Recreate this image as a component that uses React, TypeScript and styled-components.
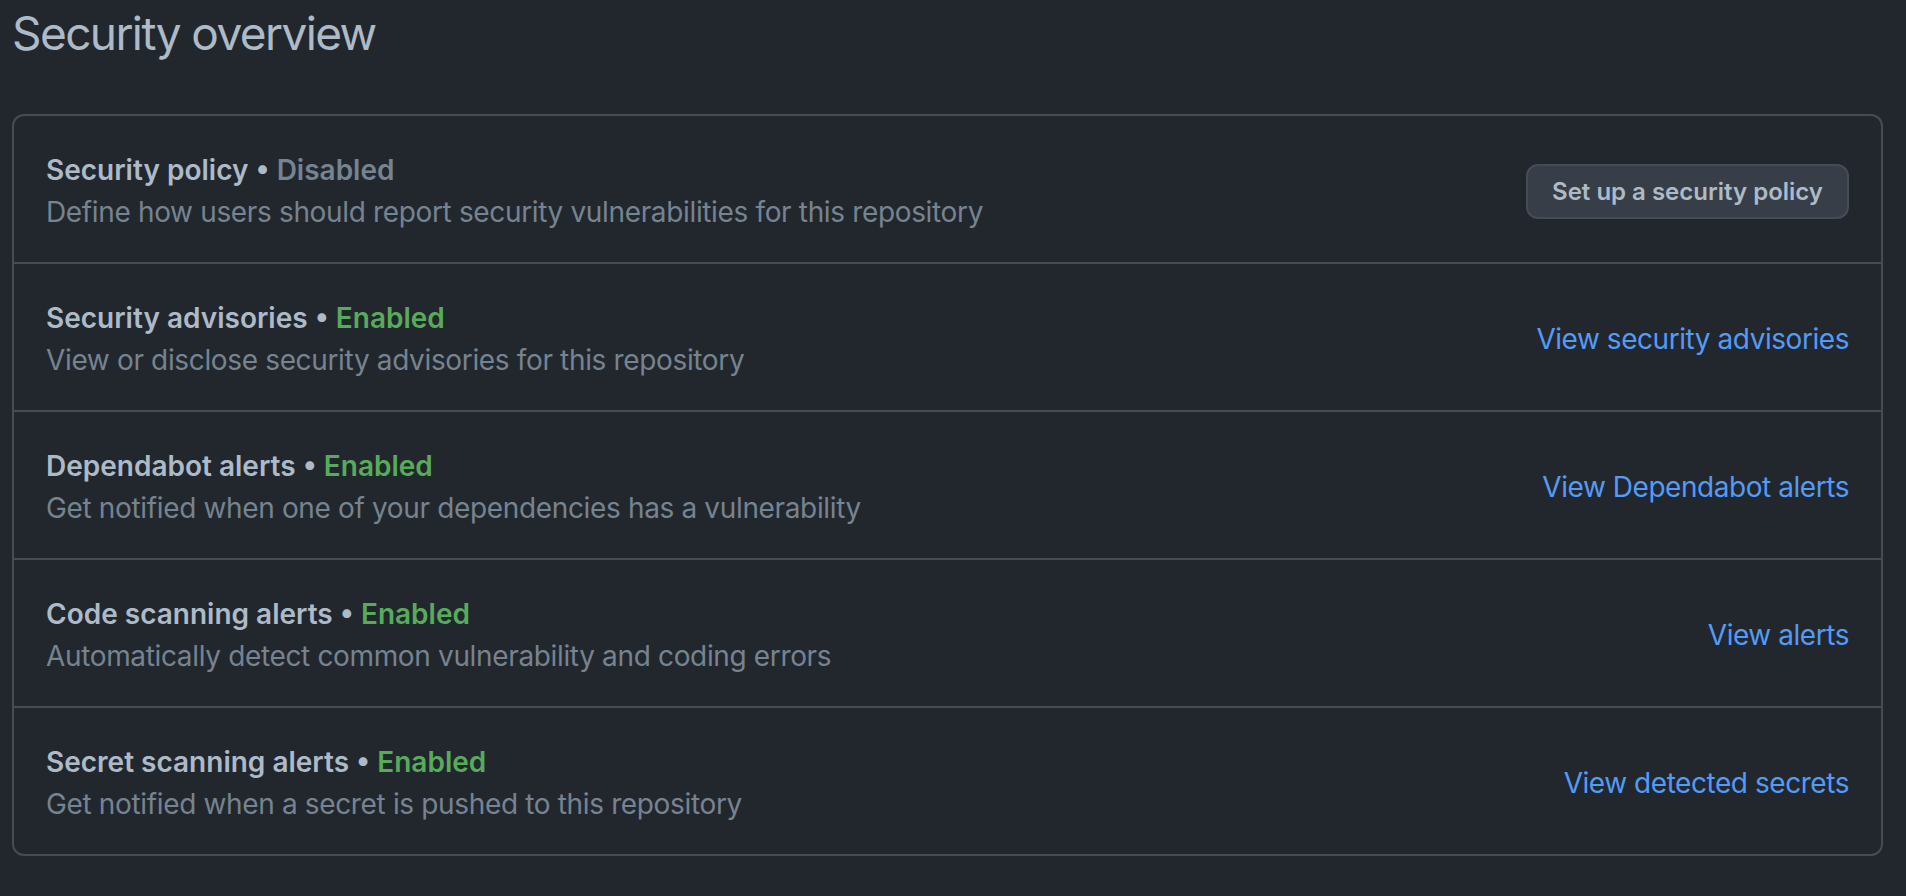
import React from "react";
import styled, { createGlobalStyle } from "styled-components";

const GlobalStyle = createGlobalStyle`
  html, body {
    margin: 0;
    padding: 0;
    background: #22272e;
  }
  body {
    font-family: Inter, "Noto Sans", "Liberation Sans", sans-serif;
    color: #adbac7;
  }
`;

const Page = styled.main`
  box-sizing: border-box;
  width: 1906px;
  min-height: 896px;
  padding: 3px 23px 0 12px;
  background: #22272e;
`;

const Heading = styled.h1`
  margin: 0 0 51px;
  font-size: 46px;
  line-height: 60px;
  font-weight: 400;
  letter-spacing: -1.6px;
  color: #adbac7;
`;

const Box = styled.section`
  border: 2px solid #444c56;
  border-radius: 12px;
  overflow: hidden;
`;

const Row = styled.div`
  display: flex;
  align-items: center;
  justify-content: space-between;
  padding: 33px 32px 29px;
  & + & {
    border-top: 2px solid #444c56;
  }
`;

const Info = styled.div`
  display: flex;
  flex-direction: column;
`;

const Title = styled.div`
  font-size: 28px;
  line-height: 42px;
  font-weight: 600;
  color: #adbac7;
`;

const Status = styled.span<{ $enabled: boolean }>`
  color: ${(p) => (p.$enabled ? "#57ab5a" : "#768390")};
`;

const Description = styled.div`
  font-size: 28px;
  line-height: 42px;
  font-weight: 400;
  letter-spacing: -0.35px;
  color: #768390;
`;

const ActionLink = styled.a`
  font-size: 28px;
  line-height: 42px;
  letter-spacing: -0.45px;
  color: #539bf5;
  text-decoration: none;
`;

const Button = styled.button`
  box-sizing: border-box;
  height: 55px;
  padding: 0 24px;
  font-family: inherit;
  font-size: 24px;
  font-weight: 600;
  color: #adbac7;
  background: #373e47;
  border: 2px solid #444c56;
  border-radius: 12px;
`;

type Item = {
  title: string;
  enabled: boolean;
  description: string;
  action: string;
  button?: boolean;
};

const items: Item[] = [
  {
    title: "Security policy",
    enabled: false,
    description: "Define how users should report security vulnerabilities for this repository",
    action: "Set up a security policy",
    button: true,
  },
  {
    title: "Security advisories",
    enabled: true,
    description: "View or disclose security advisories for this repository",
    action: "View security advisories",
  },
  {
    title: "Dependabot alerts",
    enabled: true,
    description: "Get notified when one of your dependencies has a vulnerability",
    action: "View Dependabot alerts",
  },
  {
    title: "Code scanning alerts",
    enabled: true,
    description: "Automatically detect common vulnerability and coding errors",
    action: "View alerts",
  },
  {
    title: "Secret scanning alerts",
    enabled: true,
    description: "Get notified when a secret is pushed to this repository",
    action: "View detected secrets",
  },
];

export default function App() {
  return (
    <>
      <GlobalStyle />
      <Page>
        <Heading>Security overview</Heading>
        <Box>
          {items.map((it) => (
            <Row key={it.title}>
              <Info>
                <Title>
                  {it.title} •{" "}
                  <Status $enabled={it.enabled}>{it.enabled ? "Enabled" : "Disabled"}</Status>
                </Title>
                <Description>{it.description}</Description>
              </Info>
              {it.button ? (
                <Button type="button">{it.action}</Button>
              ) : (
                <ActionLink href="#">{it.action}</ActionLink>
              )}
            </Row>
          ))}
        </Box>
      </Page>
    </>
  );
}
